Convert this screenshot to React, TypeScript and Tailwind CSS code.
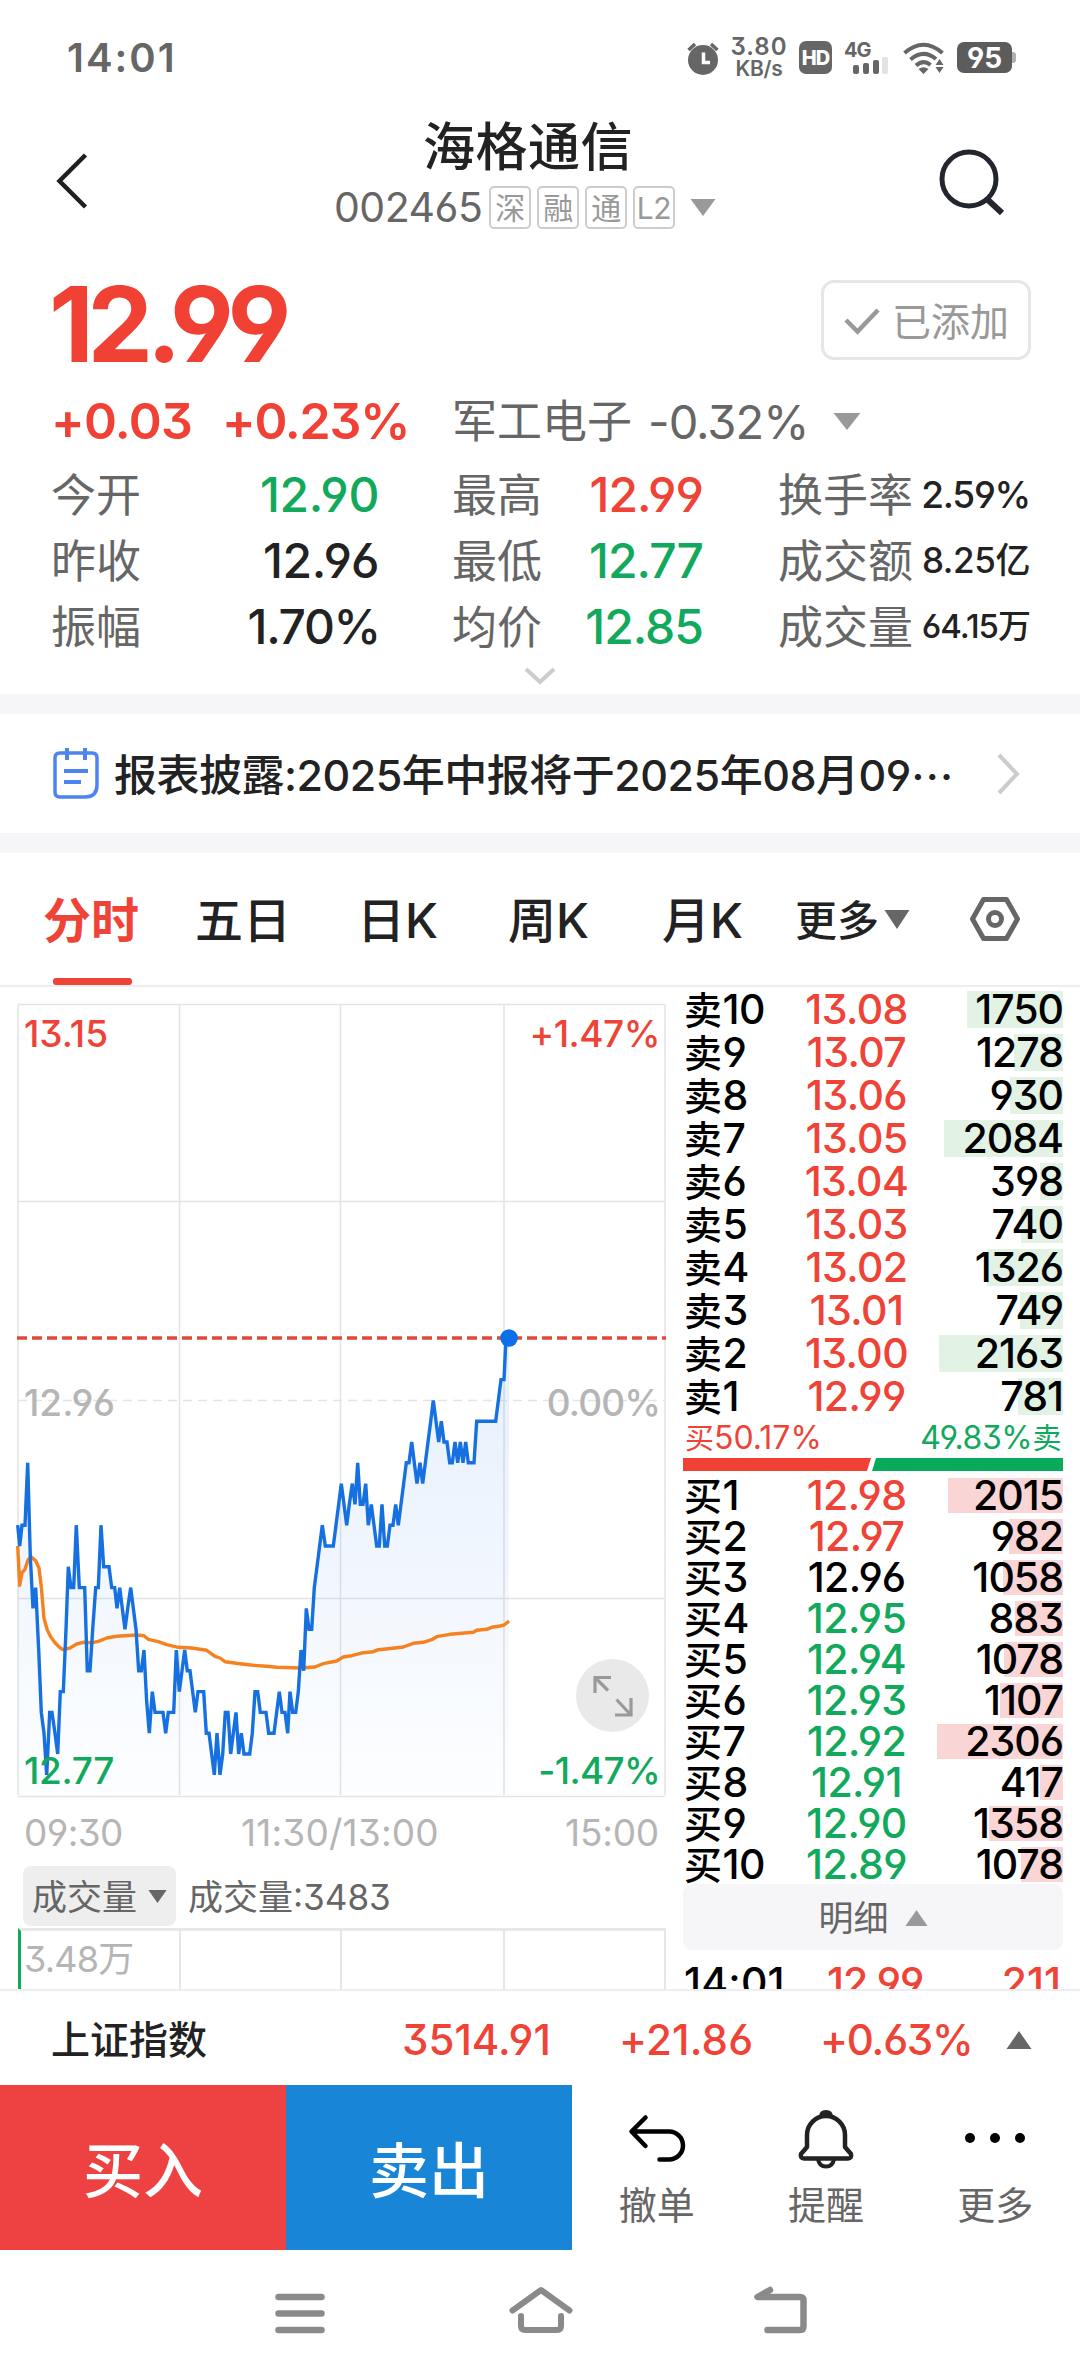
import React from "react";

const RED = "text-[#ee4336]";
const GREEN = "text-[#11a95c]";

const sells = [
  ["卖10", "13.08", "1750", 96],
  ["卖9", "13.07", "1278", 49],
  ["卖8", "13.06", "930", 53],
  ["卖7", "13.05", "2084", 119],
  ["卖6", "13.04", "398", 23],
  ["卖5", "13.03", "740", 42],
  ["卖4", "13.02", "1326", 76],
  ["卖3", "13.01", "749", 43],
  ["卖2", "13.00", "2163", 124],
  ["卖1", "12.99", "781", 45],
] as const;

const buys = [
  ["买1", "12.98", "2015", 115],
  ["买2", "12.97", "982", 54],
  ["买3", "12.96", "1058", 60],
  ["买4", "12.95", "883", 48],
  ["买5", "12.94", "1078", 59],
  ["买6", "12.93", "1107", 63],
  ["买7", "12.92", "2306", 126],
  ["买8", "12.91", "417", 23],
  ["买9", "12.90", "1358", 74],
  ["买10", "12.89", "1078", 42],
] as const;

/* Intraday prices: [x in thirds of a pixel, ticks below the previous close] */
const ticks: [number, number][] = [
  [53, 6], [59, 7], [66, 6], [75, 6], [83, 3], [91, 7.5], [99, 10], [107, 9], [116, 12], [124, 15], [132, 16], [140, 18],
  [149, 15], [156, 15], [165, 16], [173, 17], [181, 14], [190, 14], [198, 11], [205, 8], [213, 9], [221, 9], [229, 6],
  [238, 9], [254, 9], [262, 13], [270, 13], [278, 11], [287, 9], [295, 9], [303, 6], [311, 8], [327, 8], [335, 9], [344, 9],
  [351, 10], [359, 9], [367, 10], [375, 11], [383, 10], [392, 9], [408, 11], [416, 13], [424, 13], [432, 12], [440, 14.5],
  [448, 16], [457, 14], [465, 15], [489, 15], [497, 16], [505, 15], [521, 15], [529, 12], [538, 14], [554, 12], [562, 13],
  [570, 13], [586, 15], [594, 14], [611, 14], [619, 16], [627, 16], [643, 18], [651, 16], [660, 18], [668, 17], [676, 15],
  [684, 15], [692, 17], [700, 16], [708, 15], [716, 17], [724, 16], [732, 17], [749, 17], [757, 16], [765, 14], [773, 14],
  [781, 15], [798, 15], [806, 16], [822, 16], [838, 14], [846, 15], [855, 15], [863, 16], [870, 14], [878, 15], [887, 15],
  [895, 14], [903, 12], [911, 13], [919, 10], [927, 11], [935, 11], [943, 9], [951, 8], [967, 6], [976, 7], [1000, 7],
  [1008, 6], [1024, 4], [1040, 6], [1048, 5], [1057, 4], [1065, 5], [1073, 3], [1081, 5], [1089, 5], [1097, 4], [1105, 6],
  [1114, 5], [1122, 6], [1130, 7], [1138, 7], [1146, 5], [1154, 7], [1162, 7], [1170, 6], [1179, 6], [1187, 5], [1195, 6],
  [1203, 5], [1219, 3], [1227, 3], [1235, 2], [1243, 3], [1251, 4], [1260, 3], [1268, 4], [1284, 2], [1292, 1], [1300, 0],
  [1316, 2], [1324, 1], [1332, 2], [1341, 2], [1349, 3], [1357, 3], [1365, 2], [1373, 3], [1381, 2], [1389, 3], [1397, 2],
  [1405, 3], [1422, 3], [1430, 1], [1487, 1], [1503, -1], [1512, -1], [1518, -3], [1527, -3],
];

/* Average price: both coordinates in thirds of a pixel, y from the zero line */
const avg: [number, number][] = [
  [53, 438], [59, 556], [66, 518], [75, 508], [84, 480], [93, 470], [107, 482], [117, 505], [124, 560], [132, 655],
  [142, 690], [152, 710], [165, 728], [180, 743], [190, 749], [210, 744], [230, 732], [250, 727], [278, 728], [295, 724],
  [320, 714], [350, 709], [410, 705], [432, 707], [445, 718], [475, 725], [500, 734], [535, 742], [575, 744], [620, 751],
  [645, 769], [660, 774], [675, 785], [720, 791], [760, 796], [800, 799], [830, 802], [900, 804], [945, 801], [970, 791],
  [1010, 783], [1030, 771], [1055, 767], [1090, 758], [1120, 755], [1135, 749], [1165, 746], [1210, 741], [1240, 730],
  [1270, 727], [1295, 719], [1310, 710], [1350, 703], [1420, 697], [1430, 691], [1460, 688], [1475, 682], [1500, 678],
  [1512, 675], [1527, 663],
];

/* The chart's own y axis starts at 987 px on the page */
const priceLine = ticks.map(([x, k]) => `${(x / 3).toFixed(1)},${(413.4 + k * 20.8).toFixed(1)}`).join(" ");
const avgLine = avg.map(([x, y]) => `${(x / 3).toFixed(1)},${(413 + y / 3).toFixed(1)}`).join(" ");

function Triangle({ up, className }: { up?: boolean; className: string }) {
  return (
    <svg viewBox="0 0 26 17" preserveAspectRatio="none" className={`shrink-0 ${className}`} fill="currentColor">
      <path d={up ? "M13 0L25.5 17H.5Z" : "M.5 0H25.5L13 17Z"} />
    </svg>
  );
}

function StatusBar() {
  return (
    <header className="flex h-[114px] items-center pl-[67px] pt-px text-[#666]">
      <span className="w-[620px] text-[40px] font-semibold tracking-[2px]">14:01</span>
      <svg className="h-[34px] w-[32px] shrink-0" viewBox="0 0 32 34" fill="#666">
        <circle cx="16" cy="19" r="15" />
        <path d="M1.500 9L8 3M30.500 9L24 3" stroke="#666" strokeWidth="3.500" />
        <path d="M16.500 11.500V21.500H23" stroke="#fff" strokeWidth="3.500" fill="none" />
      </svg>
      <div className="ml-[10px] flex w-[60px] flex-col items-center font-semibold leading-[22px]">
        <span className="text-[24px] tracking-[1px]">3.80</span>
        <span className="text-[21px] tracking-[-0.300px]">KB/s</span>
      </div>
      <span className="ml-[10px] flex h-[33px] w-[33px] items-center justify-center rounded-[7px] bg-[#666] text-[20px] font-extrabold tracking-[-1px] text-white">
        HD
      </span>
      <div className="relative ml-[12px] h-[32px] w-[46px]">
        <span className="absolute left-0 top-0 text-[20px] font-bold leading-[16px] tracking-[-1px]">4G</span>
        <svg className="absolute bottom-0 left-[9px] h-[17px] w-[36px]" viewBox="0 0 36 17">
          <rect x="0" y="8" width="6" height="9" rx="2" fill="#666" />
          <rect x="10" y="6" width="6" height="11" rx="2" fill="#666" />
          <rect x="20" y="3" width="6" height="14" rx="2" fill="#666" />
          <rect x="29" y="0" width="6" height="17" rx="2" fill="#e2e2e2" />
        </svg>
      </div>
      <svg className="ml-[13px] h-[32px] w-[41px] shrink-0" viewBox="0 0 41 32" fill="none" stroke="#666" strokeWidth="4">
        <path d="M1.500 11Q20.500-5.500 39.500 11M7.500 17.500Q20.500 6.500 33 17" />
        <path d="M13 23.500Q20.500 17 27.500 23" />
        <path d="M15.500 27Q20.500 23.500 25.500 27L20.500 32ZM36.500 17L40.500 23H32.500ZM36.500 31L40.500 25H32.500Z" fill="#666" stroke="none" />
      </svg>
      <div className="ml-[13px] flex h-[31px] w-[55px] items-center justify-center rounded-[7px] bg-[#5c5c5c] text-[28px] font-bold text-white">
        95
      </div>
      <span className="h-[11px] w-[4px] rounded-r-[3px] bg-[#b0b0b0]" />
    </header>
  );
}

function TitleBar() {
  return (
    <div className="flex h-[136px] items-start">
      <svg className="ml-[56px] mt-[39px] h-[56px] w-[32px] shrink-0" viewBox="0 0 32 56" fill="none" stroke="#1f1f1f" strokeWidth="4.500">
        <path d="M29.500 2L3.500 28L29.500 54" />
      </svg>
      <div className="ml-[246px] flex w-[603px] flex-col items-start pt-[8px]">
        <h1 className="ml-[89px] text-[52px] font-medium leading-[52px] tracking-[0.500px] text-[#222]">海格通信</h1>
        <div className="mt-[12px] flex h-[43px] items-center">
          <span className="w-[155px] text-[41px] tracking-[-0.500px] text-[#666]">002465</span>
          <div className="flex gap-[6px]">
            {["深", "融", "通", "L2"].map((t) => (
              <span
                key={t}
                className="flex h-[43px] w-[42px] items-center justify-center rounded-[5px] border-2 border-[#ccc] text-[30px] tracking-[-0.500px] text-[#999]"
              >
                {t}
              </span>
            ))}
          </div>
          <Triangle className="ml-[15px] h-[17px] w-[26px] text-[#999]" />
        </div>
      </div>
      <svg className="mt-[34px] h-[68px] w-[68px] shrink-0" viewBox="0 0 68 68" fill="none" stroke="#24262f" strokeWidth="5">
        <circle cx="32" cy="31" r="27" />
        <path d="M50.500 51.500L65 65" strokeWidth="6" />
      </svg>
    </div>
  );
}

function Stat({ label, value, color, size }: { label: string; value: string; color: string; size: string }) {
  return (
    <div className="flex h-[66px] items-center justify-between">
      <span className="pt-[2px] text-[45px] text-[#666]">{label}</span>
      <span className={`font-medium ${color} ${size}`}>{value}</span>
    </div>
  );
}

function Quote() {
  const big = "pt-[2px] text-[48px] tracking-[-1px]";
  const wide = "pt-[2px] text-[48px] tracking-[-0.400px]";
  return (
    <section className="h-[444px] pl-[51px] pr-[49px]">
      <div className="flex h-[137px] justify-between pt-[30px]">
        <span className="ml-[-2px] mt-[-4px] text-[104px] font-bold leading-[96px] tracking-[-6.300px] text-[#f04134]">12.99</span>
        <span className="flex h-[80px] w-[210px] items-center rounded-[13px] border-[3px] border-[#e6e6e6] pl-[20px] pt-[2px] text-[39px] text-[#999]">
          <svg className="mr-[12px] h-[28px] w-[36px]" viewBox="0 0 36 28" fill="none" stroke="#999" strokeWidth="4.500">
            <path d="M2 13L13.500 24.500L34 3" />
          </svg>
          已添加
        </span>
      </div>
      <div className="mb-[6px] flex h-[68px] items-center">
        <span className="w-[171px] text-[50px] font-semibold tracking-[-0.700px] text-[#f04134]">+0.03</span>
        <span className="w-[230px] text-[50px] font-semibold tracking-[-1.200px] text-[#f04134]">+0.23%</span>
        <span className="text-[45px] text-[#666]">军工电子</span>
        <span className="ml-[16px] w-[168px] text-[47px] tracking-[-1px] text-[#666]">-0.32%</span>
        <Triangle className="ml-[17px] h-[17px] w-[28px] text-[#999]" />
      </div>
      <div className="flex">
        <div className="w-[328px]">
          <Stat label="今开" value="12.90" color={GREEN} size={wide} />
          <Stat label="昨收" value="12.96" color="text-[#222]" size={wide} />
          <Stat label="振幅" value="1.70%" color="text-[#222]" size="-mr-px pt-[2px] text-[48px] tracking-[-1.300px]" />
        </div>
        <div className="ml-[73px] w-[251px]">
          <Stat label="最高" value="12.99" color={RED} size={big} />
          <Stat label="最低" value="12.77" color={GREEN} size={big} />
          <Stat label="均价" value="12.85" color={GREEN} size={big} />
        </div>
        <div className="ml-[75px] w-[252px]">
          <Stat label="换手率" value="2.59%" color="text-[#222]" size="text-[37px] tracking-[-1.300px]" />
          <Stat label="成交额" value="8.25亿" color="text-[#222]" size="text-[35px] tracking-[-0.400px]" />
          <Stat label="成交量" value="64.15万" color="text-[#222]" size="text-[33px] tracking-[-1px]" />
        </div>
      </div>
      <svg className="ml-[473px] mt-[8px] h-[18px] w-[32px]" viewBox="0 0 32 18" fill="none" stroke="#ccc" strokeWidth="4">
        <path d="M2 2L16 15L30 2" />
      </svg>
    </section>
  );
}

function News() {
  return (
    <section className="flex h-[159px] items-center border-y-[20px] border-[#f6f6f9] pl-[53px]">
      <svg className="mt-[-2px] h-[52px] w-[46px] shrink-0" viewBox="0 0 46 52" fill="none" stroke="#4d84f0" strokeWidth="4">
        <path d="M7 6H39Q44 6 44 11V38Q44 50 32 50H7Q2 50 2 45V11Q2 6 7 6Z" strokeWidth="3.500" />
        <path d="M14 1V13M32 1V13M11 24H35M11 35H28" />
      </svg>
      <p className="ml-[15px] flex w-[883px] items-center whitespace-nowrap pt-[3px] text-[43px] font-medium text-[#222]">
        <span className="tracking-[-0.500px]">报表披露:2025年中报将于2025年08月09</span>
        <span className="font-['Noto_Sans_CJK_SC',sans-serif]">…</span>
      </p>
      <svg className="h-[42px] w-[24px]" viewBox="0 0 24 42" fill="none" stroke="#ccc" strokeWidth="4">
        <path d="M2 2L20 21L2 40" />
      </svg>
    </section>
  );
}

function Tabs() {
  return (
    <nav className="flex h-[134px] items-center border-b-2 border-[#eee] pl-[43px] text-[48px] font-medium text-[#222]">
      <span className="relative flex h-full w-[152px] items-center pt-[4px] font-bold text-[#ee4336]">
        分时
        <i className="absolute bottom-0 left-[10px] h-[7px] w-[79px] rounded-[3px] bg-[#ee4336]" />
      </span>
      <span className="w-[162px] pt-[4px]">五日</span>
      <span className="w-[151px] pt-[4px]">日K</span>
      <span className="w-[154px] pt-[4px]">周K</span>
      <span className="w-[133px] pt-[4px]">月K</span>
      <span className="w-[89px] pt-[4px] text-[42px]">更多</span>
      <Triangle className="h-[19px] w-[26px] text-[#666]" />
      <svg className="ml-[59px] h-[46px] w-[52px]" viewBox="0 0 52 46" fill="none" stroke="#666" strokeWidth="5">
        <path d="M14.500 3.500H37.500L48.500 23L37.500 42.500H14.500L3.500 23Z" strokeLinejoin="round" />
        <circle cx="26" cy="23" r="6.500" />
      </svg>
    </nav>
  );
}

function Chart() {
  const label = "absolute text-[37px] font-[450] leading-[40px]";
  return (
    <div className="relative h-[824px]">
      <svg className="block h-[824px] w-[668px]" viewBox="0 0 668 824" fill="none">
        <defs>
          <linearGradient id="area" x1="0" y1="350" x2="0" y2="809" gradientUnits="userSpaceOnUse">
            <stop offset="0" stopColor="#1670e8" stopOpacity="0.11" />
            <stop offset="1" stopColor="#1670e8" stopOpacity="0.01" />
          </linearGradient>
        </defs>
        <g stroke="#e4e4e4" strokeWidth="1.500">
          <path d="M18 17.500H665M18 214.500H665M18 611.500H665M18 809.500H665" />
          <path d="M18 18V808M179.500 18V808M340.500 18V808M504 18V808M665 18V808" />
          <path d="M18 413.500H665" strokeDasharray="9 6" />
        </g>
        <polygon points={`17.700,809 ${priceLine} 509,809`} fill="url(#area)" />
        <path d="M17 351H666" stroke="#e0483d" strokeWidth="3.500" strokeDasharray="10 5" />
        <polyline points={avgLine} stroke="#f5821f" strokeWidth="3.400" strokeLinejoin="round" />
        <polyline points={priceLine} stroke="#1670e0" strokeWidth="3.400" />
        <circle cx="509" cy="351" r="8.800" fill="#0d6eea" />
      </svg>
      <span className={`${label} left-[24px] top-[27px] ${RED}`}>13.15</span>
      <span className={`${label} right-[7px] top-[27px] tracking-[-0.500px] ${RED}`}>+1.47%</span>
      <span className={`${label} left-[24px] top-[396px] text-[#b5b5b5]`}>12.96</span>
      <span className={`${label} right-[7px] top-[396px] tracking-[-0.900px] text-[#b5b5b5]`}>0.00%</span>
      <span className={`${label} left-[24px] top-[764px] tracking-[-0.300px] ${GREEN}`}>12.77</span>
      <span className={`${label} right-[7px] top-[764px] tracking-[-0.700px] ${GREEN}`}>-1.47%</span>
      <svg className="absolute left-[576px] top-[672px] h-[73px] w-[73px]" viewBox="0 0 73 73" fill="none">
        <circle cx="36.500" cy="36.500" r="36.500" fill="#e9e9e9" />
        <path d="M35 18.500H19V34M19.500 19L32 31.500M39 56H55V39M54 55L40.500 40.500" stroke="#999" strokeWidth="3.200" />
      </svg>
    </div>
  );
}

function Volume() {
  return (
    <>
      <div className="flex h-[42px] items-center pl-[24px] pr-[8px] text-[37px] text-[#b5b5b5]">
        <span className="w-[217px] tracking-[-0.600px]">09:30</span>
        <span className="w-[208px] tracking-[0.200px]">11:30/13:00</span>
        <span className="flex-1 text-right tracking-[-0.200px]">15:00</span>
      </div>
      <div className="ml-[23px] mt-[13px] flex h-[60px] items-center text-[35px] text-[#666]">
        <span className="flex h-full w-[153px] items-center rounded-[8px] bg-[#eee] pl-[9px] pt-[3px]">
          成交量
          <Triangle className="mb-[2px] ml-[11px] h-[13px] w-[19px] text-[#666]" />
        </span>
        <span className="ml-[12px] pt-[3px]">成交量:3483</span>
      </div>
      <div className="relative ml-[18px] mt-[2px] flex h-[62px] w-[648px] border-l-[3px] border-t-[3px] border-l-[#11a95c] border-t-[#e8e8e8]">
        <span className="w-[160px] border-r-2 border-[#e6e6e6] pl-[3px] text-[36px] leading-[57px] tracking-[-0.800px] text-[#b5b5b5]">3.48万</span>
        <span className="w-[161px] border-r-2 border-[#e6e6e6]" />
        <span className="w-[163px] border-r-2 border-[#e6e6e6]" />
        <span className="w-[161px] border-r-2 border-[#e6e6e6]" />
      </div>
    </>
  );
}

function Level({ row, sell, height, bar }: { row: readonly [string, string, string, number]; sell?: boolean; height: string; bar: string }) {
  const [name, price, qty, width] = row;
  const color = Number(price) > 12.96 ? RED : price === "12.96" ? "text-black" : GREEN;
  return (
    <div className={`flex shrink-0 items-center pt-px text-[41px] font-[450] tracking-[-0.600px] text-black ${height}`}>
      <span className="w-[111px] pl-px">
        <span className="text-[38px] tracking-[0.500px]">{name[0]}</span>
        {name.slice(1)}
      </span>
      <span className={`w-[125px] text-center ${color}`}>{price}</span>
      <span className="relative flex h-full flex-1 items-center justify-end">
        <i className={`absolute right-0 ${bar} ${sell ? "bg-[#e2f2e4]" : "bg-[#f9d5d5]"}`} style={{ width }} />
        <span className="relative tracking-[-1px]">{qty}</span>
      </span>
    </div>
  );
}

function OrderBook() {
  return (
    <div className="ml-[16px] flex w-[380px] flex-col">
      {sells.map((r) => (
        <Level key={r[0]} row={r} sell height="h-[43px]" bar="h-[37px]" />
      ))}
      <div className="flex h-[41px] shrink-0 items-center justify-between px-[2px] pt-px text-[32px]">
        <span className={RED}>
          <span className="text-[29px]">买</span>50.17%
        </span>
        <span className={`tracking-[-0.400px] ${GREEN}`}>
          49.83%<span className="text-[29px]">卖</span>
        </span>
      </div>
      <div className="flex h-[13px] shrink-0 gap-[1px]">
        <i className="w-[188px] bg-[#f04134] [clip-path:polygon(0_0,100%_0,184px_100%,0_100%)]" />
        <i className="flex-1 bg-[#08aa5b] [clip-path:polygon(4px_0,100%_0,100%_100%,0_100%)]" />
      </div>
      <div className="mt-[3px] shrink-0">
        {buys.map((r) => (
          <Level key={r[0]} row={r} height="h-[41px]" bar="h-[35px]" />
        ))}
      </div>
      <div className="flex h-[66px] shrink-0 items-center justify-center rounded-[9px] bg-[#f6f6f9] pt-[2px] text-[35px] text-[#666]">
        明细
        <Triangle up className="ml-[16px] h-[16px] w-[23px] text-[#999]" />
      </div>
      <div className="flex h-[62px] shrink-0 items-center pt-[2px] text-[41px] font-[450]">
        <span className="w-[144px] pl-px tracking-[0.200px] text-black">14:01</span>
        <span className={`flex-1 tracking-[-1px] ${RED}`}>12.99</span>
        <span className={`pr-[2px] ${RED}`}>211</span>
      </div>
    </div>
  );
}

function IndexBar() {
  return (
    <div className="flex h-[96px] items-center border-t-2 border-[#eee] pl-[51px] pt-[3px] text-[42px] font-medium text-[#ee4336]">
      <span className="w-[351px] text-[39px] text-[#222]">上证指数</span>
      <span className="w-[217px]">3514.91</span>
      <span className="w-[201px] tracking-[0.200px]">+21.86</span>
      <span className="w-[186px] tracking-[-1.200px]">+0.63%</span>
      <Triangle up className="h-[18px] w-[26px] text-[#666]" />
    </div>
  );
}

function Actions() {
  const item = "flex flex-1 flex-col items-center pt-[24px] text-[38px] leading-[46px] text-[#666]";
  return (
    <div className="flex h-[165px]">
      <button className="w-[286px] bg-[#ee4242] pt-[6px] text-[60px] font-medium text-white">买入</button>
      <button className="w-[286px] bg-[#1985d6] pt-[6px] text-[60px] font-medium text-white">卖出</button>
      <div className="flex flex-1">
        <div className={item}>
          <svg className="mb-[13px] h-[60px] w-[60px]" viewBox="0 0 60 60" fill="none" stroke="#000" strokeWidth="4.500" strokeLinecap="round" strokeLinejoin="round">
            <path d="M18.500 8.500L4.500 22.500L18.500 37M5 22.500H42A14 14 0 0 1 42 50.500H32.500" />
          </svg>
          撤单
        </div>
        <div className={item}>
          <svg className="mb-[13px] h-[60px] w-[56px]" viewBox="0 0 56 60" fill="none" stroke="#222" strokeWidth="4.500" strokeLinejoin="round">
            <path d="M9 26A19 19 0 0 1 47 26V38L53 45Q54 49.500 50 49.500H6Q2 49.500 3 45L9 38Z" />
            <path d="M23 8Q23 3 28 3T33 8M20 50Q21 57.500 28 57.500T36 50" strokeWidth="4" />
          </svg>
          提醒
        </div>
        <div className={item}>
          <svg className="mb-[13px] h-[60px] w-[60px]" viewBox="0 0 60 60" fill="#000">
            <circle cx="5" cy="29" r="5" />
            <circle cx="30" cy="29" r="5" />
            <circle cx="55" cy="29" r="5" />
          </svg>
          更多
        </div>
      </div>
    </div>
  );
}

function SystemNav() {
  return (
    <footer className="flex h-[125px] items-start pl-[275px] pt-[34px]">
      <svg className="h-[52px] w-[50px]" viewBox="0 0 50 52" stroke="#8a8a8a" strokeWidth="6.500" strokeLinecap="round">
        <path d="M3.500 13H46.500M3.500 29.500H46.500M3.500 46H46.500" />
      </svg>
      <svg className="ml-[183px] h-[52px] w-[66px]" viewBox="0 0 66 52" fill="none" stroke="#8a8a8a" strokeWidth="6" strokeLinecap="round" strokeLinejoin="round">
        <path d="M4.500 26.500L33 6L61.500 26.500M13 32V42Q13 46 17 46H49Q53 46 53 42V32" />
      </svg>
      <svg className="ml-[179px] h-[52px] w-[58px]" viewBox="0 0 58 52" fill="none" stroke="#8a8a8a" strokeWidth="6.500" strokeLinecap="round" strokeLinejoin="round">
        <path d="M17 6L4.500 13H47Q50.500 13 50.500 16.500V42.500Q50.500 46 47 46H14.500" />
        <path d="M17 6L15 12L5 12.500Z" fill="#8a8a8a" strokeWidth="2" />
      </svg>
    </footer>
  );
}

export default function App() {
  return (
    <main
      lang="zh-CN"
      className="flex h-[2376px] w-[1080px] flex-col overflow-hidden bg-white font-['Inter','Noto_Sans_CJK_SC',sans-serif] leading-none [font-feature-settings:'cv03','cv04','cv09']"
    >
      <StatusBar />
      <TitleBar />
      <Quote />
      <News />
      <Tabs />
      <section className="flex h-[1002px] overflow-hidden">
        <div className="w-[667px] shrink-0">
          <Chart />
          <Volume />
        </div>
        <OrderBook />
      </section>
      <IndexBar />
      <Actions />
      <SystemNav />
    </main>
  );
}
